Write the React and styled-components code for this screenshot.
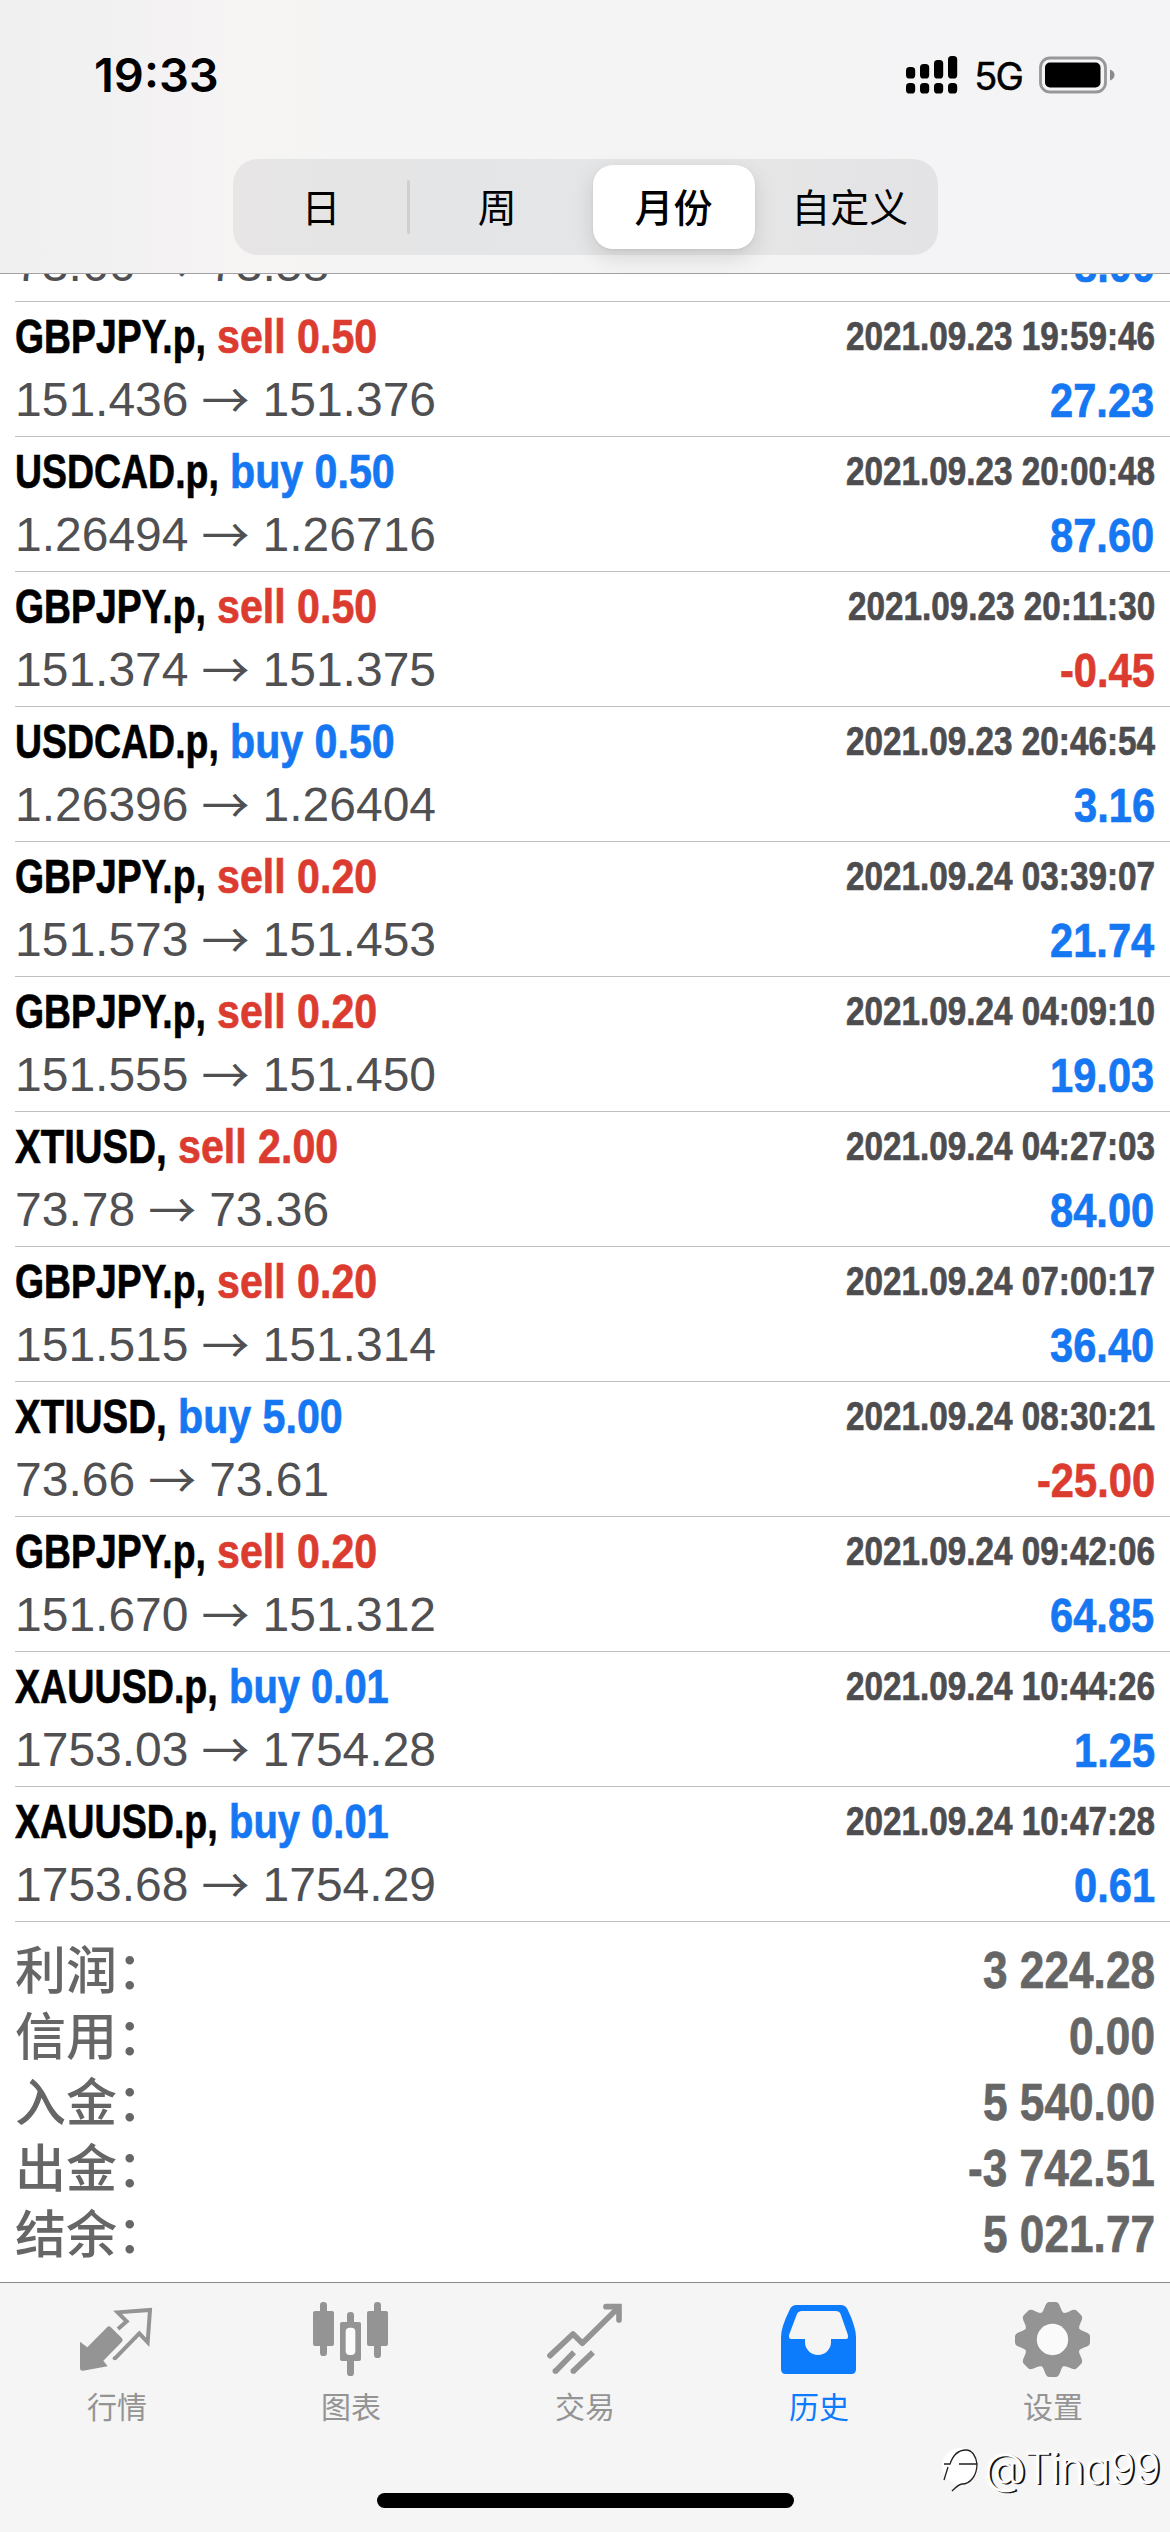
import React, { useLayoutEffect, useRef, useState } from "react";
import styled, { createGlobalStyle } from "styled-components";

const BLUE = "#1677f2";
const RED = "#dc3c30";
const GREY = "#949494";

const GlobalStyle = createGlobalStyle`
  * { box-sizing: border-box; }
  body {
    margin: 0;
    background: #fff;
    font-family: "Liberation Sans", "Noto Sans CJK SC", sans-serif;
  }
`;

const Screen = styled.div`
  position: relative;
  display: flex;
  flex-direction: column;
  width: 1170px;
  height: 2532px;
  overflow: hidden;
  background: #fff;
`;

/* ---------- header ---------- */

const Header = styled.header`
  flex: none;
  height: 274px;
  background: linear-gradient(90deg, #f0f0f0 0, #f4f2f3 190px, #f6f5f4 230px, #f4f4f5 600px, #f4f4f6 100%);
  border-bottom: 1px solid #a3a3a5;
`;

const StatusBar = styled.div`
  display: flex;
  align-items: center;
  justify-content: space-between;
  height: 150px;
  padding: 0 55px 0 94px;
`;

const Clock = styled.div`
  font: 600 47px/50px Inter, sans-serif;
  letter-spacing: 0;
  color: #000;
`;

const StatusIcons = styled.div`
  display: flex;
  align-items: center;
`;

const Network = styled.span`
  margin: 2px 17px 0 16px;
  font: 400 38px/50px Inter, sans-serif;
  letter-spacing: -1.8px;
  -webkit-text-stroke: 0.5px #000;
  color: #000;
`;

const Segments = styled.nav`
  display: flex;
  align-items: center;
  width: 705px;
  height: 96px;
  margin: 9px 0 0 233px;
  padding: 6px 0;
  border-radius: 25px;
  background: linear-gradient(90deg, #e7e5e6, #e4e5e6 35%, #e6e6e7 70%, #e3e3e5);
`;

const Segment = styled.div`
  flex: 1;
  display: flex;
  align-items: center;
  justify-content: center;
  height: 84px;
  margin: 0 7px;
  padding-bottom: 5px;
  border-radius: 20px;
  background: ${(p) => (p.$active ? "#fff" : "transparent")};
  box-shadow: ${(p) => (p.$active ? "0 8px 22px rgba(0,0,0,.13), 0 1px 3px rgba(0,0,0,.06)" : "none")};
  font: ${(p) => (p.$active ? 500 : 400)} 39px/56px "Noto Sans CJK SC", sans-serif;
  color: #000;
  white-space: nowrap;
`;

const Divider = styled.div`
  width: 3px;
  height: 54px;
  margin: 0 -1px 0 -2px;
  border-radius: 2px;
  background: #cfcfd1;
`;

/* ---------- text helpers ---------- */

const FitBox = styled.span`
  display: inline-block;
  white-space: pre;
`;

const FitText = styled.span`
  display: inline-block;
  transform: scaleX(${(p) => p.$ratio});
  transform-origin: left center;
  -webkit-text-stroke: 0.7px currentColor;
`;

function Condensed({ ratio, children }) {
  const inner = useRef(null);
  const [width, setWidth] = useState(undefined);
  useLayoutEffect(() => {
    setWidth(inner.current.offsetWidth * ratio);
  }, [ratio, children]);
  return (
    <FitBox style={{ width }}>
      <FitText ref={inner} $ratio={ratio}>
        {children}
      </FitText>
    </FitBox>
  );
}

/* ---------- deals ---------- */

const Peek = styled.div`
  flex: none;
  display: flex;
  align-items: flex-end;
  height: 28px;
  overflow: hidden;
`;

const DealRow = styled.article`
  flex: none;
  width: 1155px;
  height: 135px;
  margin-left: 15px;
  padding: 2px 15px 0 0;
  border-bottom: 1px solid #bfc1c0;
`;

const Line = styled.div`
  display: flex;
  align-items: center;
  justify-content: space-between;
  height: 64px;
  line-height: 64px;
  font-size: 48px;
  white-space: nowrap;
`;

const Title = styled.div`
  display: flex;
  font-size: 49px;
  font-weight: 700;
  color: #000;
`;

const Side = styled.span`
  margin-left: 11px;
  color: ${(p) => (p.$kind === "buy" ? BLUE : RED)};
`;

const Stamp = styled.time`
  font-size: 40px;
  font-weight: 700;
  color: #4d4d50;
`;

const Prices = styled.div`
  display: flex;
  color: #505053;
`;

const Arrow = styled.span`
  width: 48px;
  height: 58px;
  margin: 0 13px;
  font-family: "Noto Sans CJK SC", sans-serif;
  line-height: 58px;
`;

const Profit = styled.div`
  font-size: 49px;
  font-weight: 700;
  color: ${(p) => (p.$loss ? RED : BLUE)};
`;

/* ---------- summary ---------- */

const Summary = styled.section`
  flex: 1;
  padding: 15px 15px 0;
`;

const Total = styled.div`
  display: flex;
  align-items: flex-start;
  justify-content: space-between;
  height: 66px;
  line-height: 66px;
  font-size: 52px;
  font-weight: 700;
  color: #666;
`;

const TotalLabel = styled.span`
  font-family: "Noto Sans CJK SC", sans-serif;
  font-size: 51px;
  font-weight: 500;
  line-height: 61px;
`;

/* ---------- tab bar ---------- */

const TabBar = styled.footer`
  position: relative;
  flex: none;
  display: flex;
  height: 250px;
  padding-top: 18px;
  border-top: 1px solid #8a8a8c;
  background: #f5f5f5;
`;

const Tab = styled.div`
  flex: 1;
  display: flex;
  flex-direction: column;
  align-items: center;
  color: ${(p) => (p.$active ? "#0c7bfc" : GREY)};
`;

const TabIcon = styled.svg`
  width: 76px;
  height: 76px;
  overflow: visible;
`;

const TabLabel = styled.span`
  margin-top: 8px;
  font: 400 30px/40px "Noto Sans CJK SC", sans-serif;
`;

const HomeIndicator = styled.div`
  position: absolute;
  left: 377px;
  bottom: 24px;
  width: 417px;
  height: 15px;
  border-radius: 8px;
  background: #000;
`;

const Watermark = styled.div`
  position: absolute;
  right: 10px;
  bottom: 37px;
  display: flex;
  align-items: center;
  gap: 3px;
  font: 300 43px/54px Inter, sans-serif;
  font-feature-settings: "cv11";
  letter-spacing: -0.7px;
  color: #fff;
  text-shadow: 2px 1px 0 #111, 0 0 4px #fff;
`;

/* ---------- data ---------- */

const symbolRatios = { "GBPJPY.p": 0.762, "USDCAD.p": 0.764, "XTIUSD": 0.785, "XAUUSD.p": 0.768 };

const deals = [
  ["GBPJPY.p", "sell", "0.50", "2021.09.23 19:59:46", "151.436", "151.376", "27.23"],
  ["USDCAD.p", "buy", "0.50", "2021.09.23 20:00:48", "1.26494", "1.26716", "87.60"],
  ["GBPJPY.p", "sell", "0.50", "2021.09.23 20:11:30", "151.374", "151.375", "-0.45"],
  ["USDCAD.p", "buy", "0.50", "2021.09.23 20:46:54", "1.26396", "1.26404", "3.16"],
  ["GBPJPY.p", "sell", "0.20", "2021.09.24 03:39:07", "151.573", "151.453", "21.74"],
  ["GBPJPY.p", "sell", "0.20", "2021.09.24 04:09:10", "151.555", "151.450", "19.03"],
  ["XTIUSD", "sell", "2.00", "2021.09.24 04:27:03", "73.78", "73.36", "84.00"],
  ["GBPJPY.p", "sell", "0.20", "2021.09.24 07:00:17", "151.515", "151.314", "36.40"],
  ["XTIUSD", "buy", "5.00", "2021.09.24 08:30:21", "73.66", "73.61", "-25.00"],
  ["GBPJPY.p", "sell", "0.20", "2021.09.24 09:42:06", "151.670", "151.312", "64.85"],
  ["XAUUSD.p", "buy", "0.01", "2021.09.24 10:44:26", "1753.03", "1754.28", "1.25"],
  ["XAUUSD.p", "buy", "0.01", "2021.09.24 10:47:28", "1753.68", "1754.29", "0.61"],
];

const totals = [
  ["利润：", "3 224.28"],
  ["信用：", "0.00"],
  ["入金：", "5 540.00"],
  ["出金：", "-3 742.51"],
  ["结余：", "5 021.77"],
];

/* ---------- icons ---------- */

const SignalIcon = () => (
  <svg width="52" height="38" viewBox="0 0 52 38">
    {[11, 8, 4, 0].map((top, i) => (
      <g key={top}>
        <rect x={i * 14} y={top} width="9.2" height={22.5 - top} rx="3.6" />
        <rect x={i * 14} y="27" width="9.2" height="10.5" rx="3.6" />
      </g>
    ))}
  </svg>
);

const BatteryIcon = () => (
  <svg width="76" height="38" viewBox="0 0 76 38">
    <rect x="1.5" y="2" width="65" height="34" rx="9.5" fill="none" stroke="#979799" strokeWidth="2.8" />
    <rect x="6" y="6.5" width="55.5" height="25" rx="5" />
    <path d="M71 13.5c3 1 4.5 3 4.5 5.5s-1.5 4.5-4.5 5.5z" fill="#8a8a8c" />
  </svg>
);

const QuotesIcon = () => (
  <TabIcon viewBox="237 93 228 228">
    <path
      d="M240 215L262 232L322 171Q327 166 332 171L366 205Q370 210 366 215L310 272L323 289L249 302Q240 303 240 294Z"
      fill="currentColor"
    />
    <path d="M354 177L380 154L353 127L450 120L443 217L418 190L345 265" fill="none" stroke="currentColor" strokeWidth="12" />
    <circle cx="344" cy="265" r="6" fill="currentColor" />
  </TabIcon>
);

const ChartIcon = () => (
  <TabIcon viewBox="939 93 228 228" fill="currentColor">
    <rect x="960" y="96" width="21" height="162" rx="10" />
    <rect x="939" y="123" width="63" height="105" rx="6" />
    <rect x="1041" y="126" width="21" height="192" rx="10" />
    <rect x="1020" y="156" width="63" height="117" rx="6" />
    <rect x="1037" y="173" width="29" height="82" rx="12" fill="#fbfbfb" />
    <rect x="1122" y="96" width="21" height="168" rx="10" />
    <rect x="1101" y="123" width="63" height="105" rx="6" />
  </TabIcon>
);

const TradeIcon = () => (
  <TabIcon viewBox="291 93 228 228" fill="none" stroke="currentColor" strokeWidth="17" strokeLinejoin="round">
    <path d="M300 257L369 192L397 220L504 114" strokeLinecap="round" />
    <path d="M468 110H507V150" strokeLinecap="round" strokeLinejoin="miter" />
    <path d="M315 305L372 247M369 304L429 247" />
    <path d="M316 303h.1M370 303h.1" strokeLinecap="round" />
  </TabIcon>
);

const HistoryIcon = () => (
  <TabIcon viewBox="993 93 228 228">
    <path
      fill="currentColor"
      fillRule="evenodd"
      d="M1040 105H1172Q1186 105 1192 117Q1206 145 1212 167Q1218 185 1218 203V298Q1218 312 1204 312H1007Q993 312 993 298V203Q993 185 999 167Q1006 145 1020 117Q1026 105 1040 105ZM1056 123Q1044 123 1040 134L1018 193Q1014 207 1024 207H1065V216A39 39 0 0 0 1143 216V207H1188Q1197 207 1193 193L1172 133Q1168 123 1157 123Z"
    />
  </TabIcon>
);

const SettingsIcon = () => (
  <TabIcon viewBox="495 93 228 228">
    <g fill="currentColor">
      {[0, 45, 90, 135, 180, 225, 270, 315].map((angle) => (
        <path
          key={angle}
          transform={`rotate(${angle} 607.5 208.5)`}
          d="M570 134Q581 124 584 112Q589 96 598 96H617Q626 96 631 112Q634 124 645 134L625 165H590Z"
        />
      ))}
    </g>
    <circle cx="607.5" cy="208.5" r="63" fill="none" stroke="currentColor" strokeWidth="33" />
    <circle cx="607.5" cy="208.5" r="47" fill="#fafafa" />
  </TabIcon>
);

const WatermarkLogo = () => (
  <svg width="42" height="48" viewBox="0 0 42 48">
    <circle cx="21" cy="22" r="18" fill="#fff" />
    <path
      d="M5 20H11C14 11 20 6 27 6C33 6 37 12 38 20M20 20H38C38 32 31 40 23 40Q20 40 13 47M9 23L5 36"
      fill="none"
      stroke="#222"
      strokeWidth="1.3"
    />
  </svg>
);

const tabs = [
  ["行情", QuotesIcon],
  ["图表", ChartIcon],
  ["交易", TradeIcon],
  ["历史", HistoryIcon],
  ["设置", SettingsIcon],
];

/* ---------- app ---------- */

function Deal({ deal }) {
  const [symbol, kind, volume, time, open, close, profit] = deal;
  return (
    <DealRow>
      <Line>
        <Title>
          <Condensed ratio={symbolRatios[symbol]}>{`${symbol},`}</Condensed>
          <Side $kind={kind}>
            <Condensed ratio={volume === "0.01" ? 0.815 : 0.84}>{`${kind} ${volume}`}</Condensed>
          </Side>
        </Title>
        <Stamp>
          <Condensed ratio={0.832}>{time}</Condensed>
        </Stamp>
      </Line>
      <Line>
        <Prices>
          <span>{open}</span>
          <Arrow>→</Arrow>
          <span>{close}</span>
        </Prices>
        <Profit $loss={profit.startsWith("-")}>
          <Condensed ratio={0.85}>{profit}</Condensed>
        </Profit>
      </Line>
    </DealRow>
  );
}

export default function App() {
  return (
    <Screen>
      <GlobalStyle />
      <Header>
        <StatusBar>
          <Clock>19:33</Clock>
          <StatusIcons>
            <SignalIcon />
            <Network>5G</Network>
            <BatteryIcon />
          </StatusIcons>
        </StatusBar>
        <Segments>
          <Segment>日</Segment>
          <Divider />
          <Segment>周</Segment>
          <Segment $active>月份</Segment>
          <Segment>自定义</Segment>
        </Segments>
      </Header>

      <Peek>
        <DealRow>
          <Line />
          <Line>
            <Prices>
              <span>73.66</span>
              <Arrow>→</Arrow>
              <span>73.58</span>
            </Prices>
            <Profit>
              <Condensed ratio={0.85}>8.00</Condensed>
            </Profit>
          </Line>
        </DealRow>
      </Peek>
      {deals.map((deal) => (
        <Deal key={deal[3]} deal={deal} />
      ))}

      <Summary>
        {totals.map(([label, value]) => (
          <Total key={label}>
            <TotalLabel>{label}</TotalLabel>
            <Condensed ratio={0.85}>{value}</Condensed>
          </Total>
        ))}
      </Summary>

      <TabBar>
        {tabs.map(([label, Icon]) => (
          <Tab key={label} $active={label === "历史"}>
            <Icon />
            <TabLabel>{label}</TabLabel>
          </Tab>
        ))}
        <HomeIndicator />
        <Watermark>
          <WatermarkLogo />
          <span>@Tina99</span>
        </Watermark>
      </TabBar>
    </Screen>
  );
}
